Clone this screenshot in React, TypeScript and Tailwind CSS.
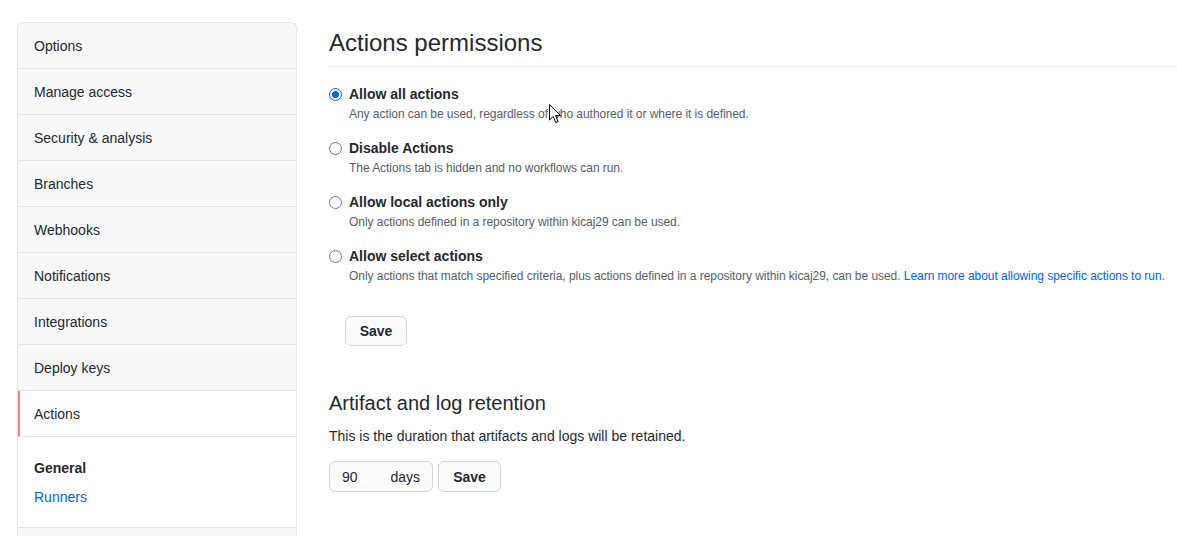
const font = "font-['Segoe_UI','Liberation_Sans',Arial,sans-serif]"

const navItems = [
  'Options',
  'Manage access',
  'Security & analysis',
  'Branches',
  'Webhooks',
  'Notifications',
  'Integrations',
  'Deploy keys',
]

const permissionOptions = [
  {
    label: 'Allow all actions',
    description: 'Any action can be used, regardless of who authored it or where it is defined.',
    checked: true,
  },
  {
    label: 'Disable Actions',
    description: 'The Actions tab is hidden and no workflows can run.',
  },
  {
    label: 'Allow local actions only',
    description: 'Only actions defined in a repository within kicaj29 can be used.',
  },
  {
    label: 'Allow select actions',
    description:
      'Only actions that match specified criteria, plus actions defined in a repository within kicaj29, can be used.',
    link: 'Learn more about allowing specific actions to run.',
  },
]

function Radio({ checked }: { checked?: boolean }) {
  return (
    <span
      className={
        checked
          ? 'flex h-[13px] w-[13px] shrink-0 items-center justify-center rounded-full border border-[#0366d6] bg-white'
          : 'flex h-[13px] w-[13px] shrink-0 items-center justify-center rounded-full border border-[#767676] bg-white'
      }
    >
      {checked && <span className="h-[7px] w-[7px] rounded-full bg-[#0366d6]" />}
    </span>
  )
}

function Sidebar() {
  return (
    <nav className="w-[280px] shrink-0 self-start overflow-hidden rounded-t-md border border-b-0 border-[#e1e4e8] bg-[#f6f8fa]">
      {navItems.map((item) => (
        <div
          key={item}
          className="flex h-[46px] items-center border-b border-[#e1e4e8] px-4 text-sm text-[#24292e]"
        >
          {item}
        </div>
      ))}
      <div className="flex h-[46px] items-center border-b border-l-2 border-[#e1e4e8] border-l-[#f9826c] bg-white pl-[14px] text-sm text-[#24292e]">
        Actions
      </div>
      <div className="border-b border-[#e1e4e8] bg-white px-4 pb-[19px] pt-[21px] text-sm leading-[21px]">
        <div className="font-semibold text-[#24292e]">General</div>
        <div className="mt-2 text-[#0366d6]">Runners</div>
      </div>
      {/* next section, only its top edge shows in the window */}
      <div className="h-[46px] border-b border-[#e1e4e8]" />
    </nav>
  )
}

function Cursor() {
  return (
    <svg
      className="pointer-events-none absolute left-[549px] top-[104px]"
      width="13"
      height="20"
      viewBox="0 0 13 20"
    >
      <path
        d="M0.5 0.5 L0.5 16 L4.2 12.4 L6.8 18.6 L9.2 17.6 L6.6 11.6 L11.6 11.6 Z"
        fill="#fff"
        stroke="#000"
        strokeWidth="1"
        strokeLinejoin="round"
      />
    </svg>
  )
}

export default function App() {
  return (
    <div className={`${font} relative min-h-[536px] bg-white text-[#24292e]`}>
      <div className="flex gap-8 pl-[17px] pt-[22px]">
        <Sidebar />
        <main className="min-w-0 flex-1 pt-[6px]">
          <div className="mb-[17px] border-b border-[#e1e4e8] pb-2">
            <h2 className="text-2xl font-normal leading-[30px]">Actions permissions</h2>
          </div>

          <div className="flex flex-col gap-[15px]">
            {permissionOptions.map((option) => (
              <div key={option.label} className="flex gap-[7px]">
                <div className="pt-[4px]">
                  <Radio checked={option.checked} />
                </div>
                <div>
                  <div className="text-sm font-semibold leading-[21px]">{option.label}</div>
                  <div className="whitespace-nowrap text-xs leading-[18px] tracking-[-0.05px] text-[#586069]">
                    {option.description}
                    {option.link && <span className="text-[#0366d6]"> {option.link}</span>}
                  </div>
                </div>
              </div>
            ))}
          </div>

          <button className="ml-4 mt-[31px] h-[30px] w-[62px] rounded-md border border-[#d1d5da] bg-[#fafbfc] text-sm font-semibold leading-5">
            Save
          </button>

          <h3 className="mt-[42px] text-xl font-normal leading-[30px]">Artifact and log retention</h3>
          <p className="mt-[8px] text-sm leading-[21px]">
            This is the duration that artifacts and logs will be retained.
          </p>

          <div className="mt-[14px] flex gap-[5px]">
            <div className="flex h-[31px] w-[104px] items-center rounded-md border border-[#d1d5da] bg-[#fafbfc] pl-3 pr-3 text-sm">
              <span className="w-[50px]">90</span>
              <span>days</span>
            </div>
            <button className="h-[31px] w-[63px] rounded-md border border-[#d1d5da] bg-[#fafbfc] text-sm font-semibold">
              Save
            </button>
          </div>
        </main>
      </div>
      <Cursor />
    </div>
  )
}
